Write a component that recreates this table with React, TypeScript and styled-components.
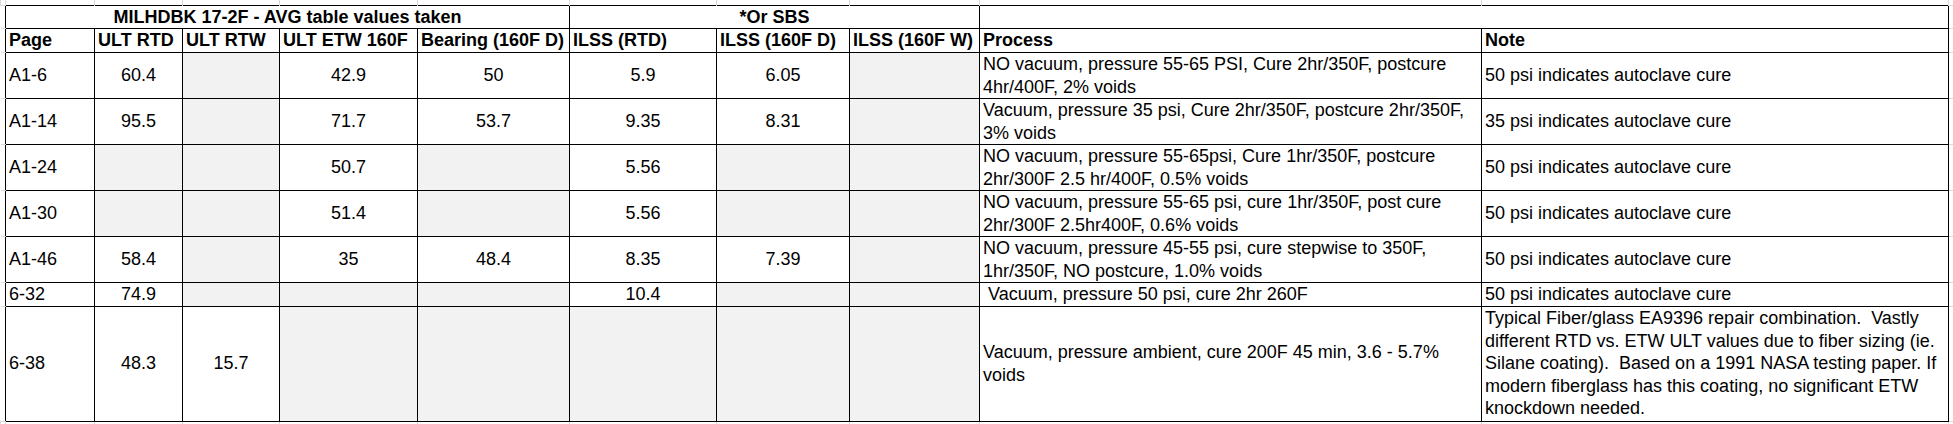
import React from "react";
import styled, { createGlobalStyle } from "styled-components";

const GlobalStyle = createGlobalStyle`
  html, body {
    margin: 0;
    padding: 0;
    background: #ffffff;
  }
  body {
    font-family: "Liberation Sans", Arial, sans-serif;
    color: #000;
  }
`;

const GRID = "#dadada";

// column widths, gutter columns at both ends
const COLS = [5, 89, 88, 97, 138, 152, 147, 133, 130, 502, 467, 5];

const Sheet = styled.table`
  border-collapse: collapse;
  table-layout: fixed;
  width: 1953px;
  font-size: 18px;
  line-height: 22.5px;
`;

const Row = styled.tr<{ $h: number }>`
  height: ${(p) => p.$h}px;
`;

const TopGutter = styled.td`
  padding: 0;
  border-right: 1px solid ${GRID};
  border-left: 1px solid ${GRID};
`;

const SideGutter = styled.td`
  padding: 0;
  border-bottom: 1px solid ${GRID};
  border-top: 1px solid ${GRID};
`;

const Title = styled.td`
  border: 1px solid #000;
  padding: 0 3px;
  font-weight: bold;
  text-align: center;
  vertical-align: middle;
  white-space: nowrap;
`;

const Head = styled.td`
  border: 1px solid #000;
  padding: 0 3px;
  font-weight: bold;
  text-align: left;
  vertical-align: middle;
  white-space: nowrap;
  overflow: hidden;
`;

const Cell = styled.td<{ $align?: "left" | "center"; $empty?: boolean }>`
  border: 1px solid #000;
  padding: 0 3px;
  text-align: ${(p) => p.$align ?? "center"};
  vertical-align: middle;
  background: ${(p) => (p.$empty ? "#f2f2f2" : "#ffffff")};
  white-space: pre;
  overflow: hidden;
`;

type Entry = {
  page: string;
  values: (string | null)[];
  process: string[];
  note: string[];
  h: number;
};

const heads = [
  "Page",
  "ULT RTD",
  "ULT RTW",
  "ULT ETW 160F",
  "Bearing (160F D)",
  "ILSS (RTD)",
  "ILSS (160F D)",
  "ILSS (160F W)",
  "Process",
  "Note",
];

const autoclave50 = ["50 psi indicates autoclave cure"];

const rows: Entry[] = [
  {
    page: "A1-6",
    values: ["60.4", null, "42.9", "50", "5.9", "6.05", null],
    process: ["NO vacuum, pressure 55-65 PSI, Cure 2hr/350F, postcure", "4hr/400F, 2% voids"],
    note: autoclave50,
    h: 45,
  },
  {
    page: "A1-14",
    values: ["95.5", null, "71.7", "53.7", "9.35", "8.31", null],
    process: ["Vacuum, pressure 35 psi, Cure 2hr/350F, postcure 2hr/350F,", "3% voids"],
    note: ["35 psi indicates autoclave cure"],
    h: 46,
  },
  {
    page: "A1-24",
    values: [null, null, "50.7", null, "5.56", null, null],
    process: ["NO vacuum, pressure 55-65psi, Cure 1hr/350F, postcure", "2hr/300F 2.5 hr/400F, 0.5% voids"],
    note: autoclave50,
    h: 46,
  },
  {
    page: "A1-30",
    values: [null, null, "51.4", null, "5.56", null, null],
    process: ["NO vacuum, pressure 55-65 psi, cure 1hr/350F, post cure", "2hr/300F 2.5hr400F, 0.6% voids"],
    note: autoclave50,
    h: 46,
  },
  {
    page: "A1-46",
    values: ["58.4", null, "35", "48.4", "8.35", "7.39", null],
    process: ["NO vacuum, pressure 45-55 psi, cure stepwise to 350F,", "1hr/350F, NO postcure, 1.0% voids"],
    note: autoclave50,
    h: 46,
  },
  {
    page: "6-32",
    values: ["74.9", null, null, null, "10.4", null, null],
    process: [" Vacuum, pressure 50 psi, cure 2hr 260F"],
    note: autoclave50,
    h: 23,
  },
  {
    page: "6-38",
    values: ["48.3", "15.7", null, null, null, null, null],
    process: ["Vacuum, pressure ambient, cure 200F 45 min, 3.6 - 5.7%", "voids"],
    note: [
      "Typical Fiber/glass EA9396 repair combination.  Vastly",
      "different RTD vs. ETW ULT values due to fiber sizing (ie.",
      "Silane coating).  Based on a 1991 NASA testing paper. If",
      "modern fiberglass has this coating, no significant ETW",
      "knockdown needed.",
    ],
    h: 115,
  },
];

const Lines = ({ lines }: { lines: string[] }) => (
  <>
    {lines.map((l, i) => (
      <React.Fragment key={i}>
        {i > 0 && <br />}
        {l}
      </React.Fragment>
    ))}
  </>
);

const GutterRow = ({ h }: { h: number }) => (
  <Row $h={h}>
    {COLS.map((_, i) => (
      <TopGutter key={i} />
    ))}
  </Row>
);

const App = () => {
  return (
    <>
      <GlobalStyle />
      <Sheet>
        <colgroup>
          {COLS.map((w, i) => (
            <col key={i} style={{ width: w }} />
          ))}
        </colgroup>
        <tbody>
          <GutterRow h={5} />
          <Row $h={23}>
            <SideGutter />
            <Title colSpan={5}>MILHDBK 17-2F - AVG table values taken</Title>
            <Title colSpan={3}>*Or SBS</Title>
            <Title colSpan={2} />
            <SideGutter />
          </Row>
          <Row $h={24}>
            <SideGutter />
            {heads.map((h) => (
              <Head key={h}>{h}</Head>
            ))}
            <SideGutter />
          </Row>
          {rows.map((r) => (
            <Row key={r.page} $h={r.h}>
              <SideGutter />
              <Cell $align="left">{r.page}</Cell>
              {r.values.map((v, i) => (
                <Cell key={i} $empty={v === null}>
                  {v}
                </Cell>
              ))}
              <Cell $align="left">
                <Lines lines={r.process} />
              </Cell>
              <Cell $align="left">
                <Lines lines={r.note} />
              </Cell>
              <SideGutter />
            </Row>
          ))}
          <GutterRow h={5} />
        </tbody>
      </Sheet>
    </>
  );
};

export default App;
